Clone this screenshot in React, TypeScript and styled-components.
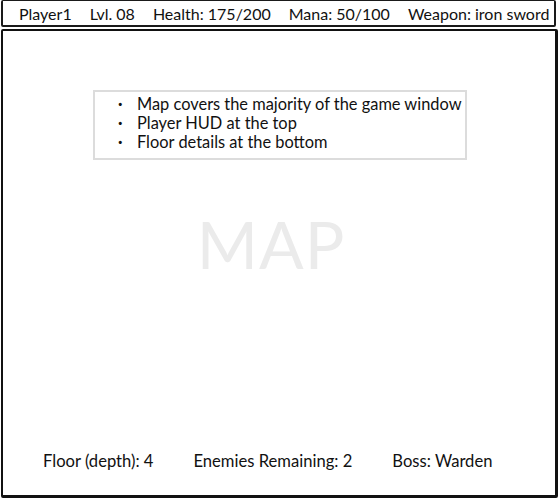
import styled, { createGlobalStyle } from 'styled-components'

const GlobalStyle = createGlobalStyle`
  html, body {
    margin: 0;
    padding: 0;
    background: #ffffff;
  }
  body {
    font-family: Lato, 'Open Sans', sans-serif;
    color: #111;
  }
`

const Screen = styled.div`
  width: 560px;
  height: 500px;
  box-sizing: border-box;
  display: flex;
  flex-direction: column;
  padding: 0 2px 2px 1px;
`

const HudBar = styled.div`
  height: 27px;
  box-sizing: border-box;
  margin-right: 2px;
  border: 2px solid #1a1a1a;
  border-top-width: 1px;
  border-radius: 2px;
  display: flex;
  align-items: center;
  gap: 18px;
  padding-left: 16px;
  font-size: 16px;
  white-space: nowrap;
`

const MapPanel = styled.div`
  flex: 1;
  margin-top: 2px;
  box-sizing: border-box;
  border: 2px solid #111;
  border-right-width: 3px;
  border-bottom-width: 3px;
  border-radius: 2px;
  display: flex;
  flex-direction: column;
  align-items: flex-start;
`

const Notes = styled.ul`
  margin: 59px 0 0 90px;
  width: 374px;
  height: 70px;
  box-sizing: border-box;
  border: 2px solid #dcdcdc;
  list-style: none;
  padding: 2px 0 0 23px;
  font-size: 16.4px;
`

const Note = styled.li`
  line-height: 19px;
  display: flex;
  &::before {
    content: '·';
    font-weight: 700;
    width: 19px;
  }
`

const MapLabel = styled.div`
  align-self: center;
  margin: 51px 16px 0 0;
  font-size: 66px;
  line-height: 66px;
  color: #ebebeb;
  letter-spacing: 1px;
`

const Spacer = styled.div`
  flex: 1;
`

const FloorBar = styled.div`
  display: flex;
  gap: 40px;
  padding: 0 0 24px 40px;
  font-size: 16.6px;
`

const hud = ['Player1', 'Lvl. 08', 'Health: 175/200', 'Mana: 50/100', 'Weapon: iron sword']
const notes = [
  'Map covers the majority of the game window',
  'Player HUD at the top',
  'Floor details at the bottom',
]
const floor = ['Floor (depth): 4', 'Enemies Remaining: 2', 'Boss: Warden']

const App = () => {
  return (
    <>
      <GlobalStyle />
      <Screen>
        <HudBar>
          {hud.map(item => <span key={item}>{item}</span>)}
        </HudBar>
        <MapPanel>
          <Notes>
            {notes.map(n => <Note key={n}>{n}</Note>)}
          </Notes>
          <MapLabel>MAP</MapLabel>
          <Spacer />
          <FloorBar>
            {floor.map(f => <span key={f}>{f}</span>)}
          </FloorBar>
        </MapPanel>
      </Screen>
    </>
  )
}

export default App
